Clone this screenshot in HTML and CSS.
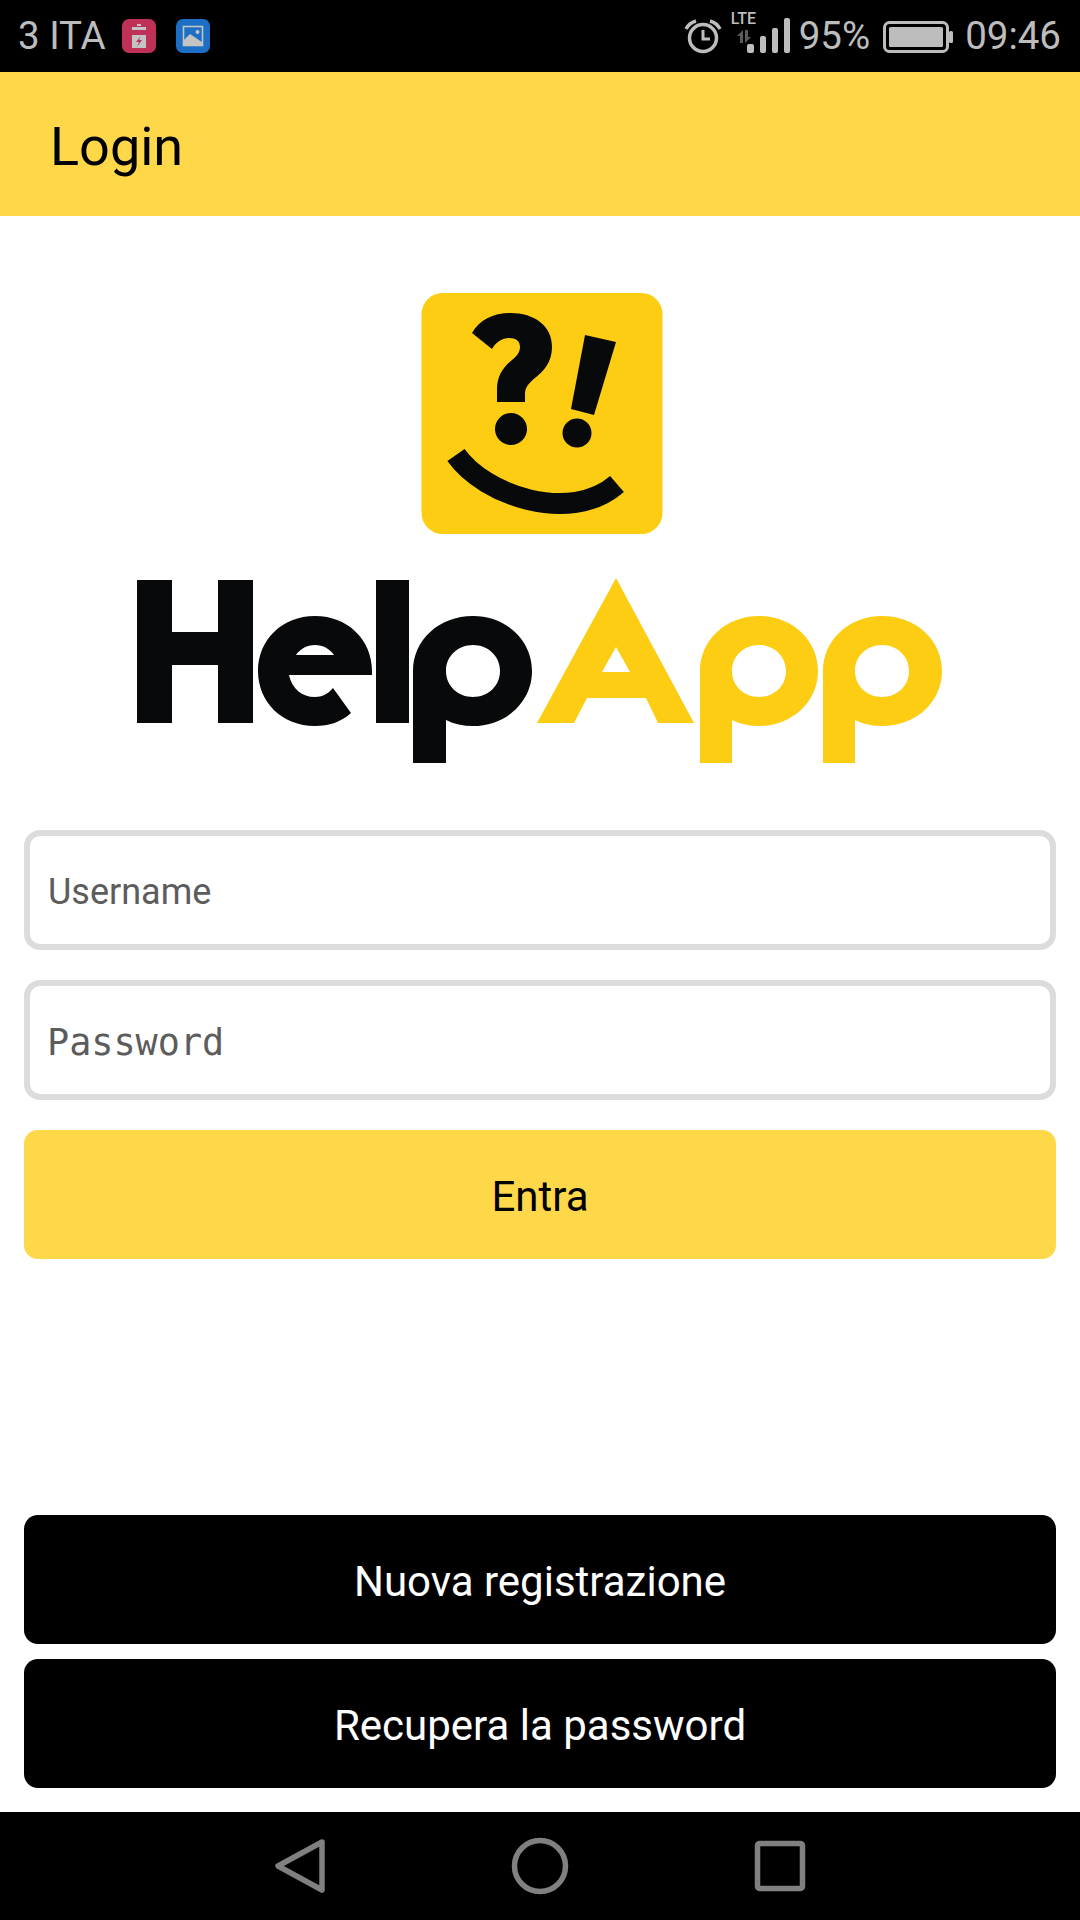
FILE: index.html
```html
<!DOCTYPE html>
<html lang="it">
<head>
<meta charset="utf-8">
<title>Login</title>
<link rel="stylesheet" href="styles.css">
</head>
<body>
<div class="screen">
  <header class="status-bar">
    <div class="status-left">
      <span class="status-text">3 ITA</span>
      <svg class="notif" viewBox="0 0 34 34"><rect width="34" height="34" rx="7" fill="#bf3157"/><path d="M15 5h4v2h-4zM10 8h14v21H10z" fill="#c4c4c4"/><rect x="10" y="11" width="14" height="5" fill="#bf3157"/><path d="M19 17l-5 6h3l-2 5 5-7h-3z" fill="#bf3157"/></svg>
      <svg class="notif" viewBox="0 0 34 34"><rect width="34" height="34" rx="7" fill="#1c6fc4"/><rect x="7.500" y="7.500" width="19" height="19" fill="none" stroke="#c4c4c4" stroke-width="1.600"/><circle cx="21.500" cy="13" r="2" fill="#c4c4c4"/><path d="M7 22l7-7 6 4 7 5v3H7z" fill="#c4c4c4"/></svg>
    </div>
    <div class="status-right">
      <svg class="alarm" viewBox="0 0 40 40">
        <circle cx="20" cy="22" r="13.500" fill="none" stroke="#bdbdbd" stroke-width="3.500"/>
        <path d="M20 14v9h7" fill="none" stroke="#bdbdbd" stroke-width="3"/>
        <path d="M3 13q3-6 10-8M37 13q-3-6-10-8" fill="none" stroke="#bdbdbd" stroke-width="3.500"/>
      </svg>
      <div class="network">
        <span class="lte">LTE</span>
        <svg class="signal" viewBox="0 0 62 40">
          <path d="M7 20l6-6v13h-3v-7zM15 14h3v7h3l-6 6z" fill="#5a5a5a"/>
          <rect x="17" y="28" width="7" height="9" rx="2" fill="#bdbdbd"/>
          <rect x="30" y="20" width="6" height="17" rx="2" fill="#bdbdbd"/>
          <rect x="42" y="12" width="6" height="25" rx="2" fill="#bdbdbd"/>
          <rect x="54" y="2" width="6" height="35" rx="2" fill="#bdbdbd"/>
        </svg>
      </div>
      <span class="status-text">95%</span>
      <svg class="battery" viewBox="0 0 72 34">
        <rect x="2.500" y="2.500" width="63" height="29" rx="5" fill="none" stroke="#bdbdbd" stroke-width="3"/>
        <rect x="7" y="7" width="54" height="20" rx="1.500" fill="#bdbdbd"/>
        <rect x="67" y="11" width="4" height="12" rx="1.500" fill="#bdbdbd"/>
      </svg>
      <span class="status-text">09:46</span>
    </div>
  </header>

  <div class="app-bar">Login</div>

  <main class="content">
    <svg class="logo" viewBox="130 293 820 470" role="img" aria-label="HelpApp">
      <rect x="421.500" y="293" width="241" height="241" rx="21" fill="#fdcd13"/>
      <g fill="#08090a">
        <path d="M472 333C479 320 493 313 510 313C535 313 552 326 552 347C552 362 544 371 535 378C529 383 525 387 525 394V402H497V389C497 376 503 367 512 360C517 356 520 352 520 347C520 341 516 338 509 338C502 338 496 342 492 349Z"/>
        <circle cx="511" cy="429" r="16"/>
        <path d="M585 335L616 342L594 415L571 409Z"/>
        <circle cx="577" cy="433" r="14.500"/>
        <path d="M456 455C484 495 570 525 617 484" fill="none" stroke="#08090a" stroke-width="21"/>
      </g>
      <g fill="#08090a">
        <path d="M137 580H172V632H218V580H253V723H218V665H172V723H137Z"/>
        <path fill-rule="evenodd" d="M372 675H289C292 689 302 697 315 697C322 697 328 694 333 688L351 713C341 722 329 726 315 726C282 726 258 702 258 671C258 640 282 616 315 616C348 616 372 640 372 671ZM296 655H334C330 649 323 645 315 645C307 645 300 649 296 655Z"/>
        <rect x="376" y="580" width="33" height="143"/>
        <path fill-rule="evenodd" d="M413 763V671C413 640 439 616 473 616C506 616 532 640 532 671C532 702 506 726 473 726C463 726 454 724 446 720V763ZM446 671C446 686 458 697 473 697C488 697 500 686 500 671C500 656 488 645 473 645C458 645 446 656 446 671Z"/>
      </g>
      <g fill="#fdcd13">
        <path fill-rule="evenodd" d="M616 578L694 723H658L646 698H587L574 723H537ZM616 647L602 672H630Z"/>
        <path fill-rule="evenodd" d="M700 763V671C700 640 726 616 759 616C792 616 818 640 818 671C818 702 792 726 759 726C749 726 740 724 732 720V763ZM732 671C732 686 744 697 759 697C774 697 786 686 786 671C786 656 774 645 759 645C744 645 732 656 732 671Z"/>
        <path fill-rule="evenodd" d="M823 763V671C823 640 849 616 882 616C916 616 942 640 942 671C942 702 916 726 882 726C872 726 863 724 855 720V763ZM855 671C855 686 867 697 882 697C897 697 909 686 909 671C909 656 897 645 882 645C867 645 855 656 855 671Z"/>
      </g>
    </svg>

    <form class="login-form">
      <div class="field">Username</div>
      <div class="field field-mono">Password</div>
      <div class="btn btn-primary">Entra</div>
    </form>

    <div class="secondary-actions">
      <div class="btn btn-dark">Nuova registrazione</div>
      <div class="btn btn-dark">Recupera la password</div>
    </div>
  </main>

  <nav class="nav-bar">
    <svg class="nav-icon" viewBox="0 0 60 60">
      <path d="M52 6L8 30L52 54Z" fill="none" stroke="#808080" stroke-width="5.500" stroke-linejoin="round"/>
    </svg>
    <svg class="nav-icon" viewBox="0 0 60 60">
      <circle cx="30" cy="30" r="25.500" fill="none" stroke="#808080" stroke-width="5.500"/>
    </svg>
    <svg class="nav-icon" viewBox="0 0 60 60">
      <rect x="7.500" y="7.500" width="45" height="45" rx="2" fill="none" stroke="#808080" stroke-width="5.500" stroke-linejoin="round"/>
    </svg>
  </nav>
</div>
</body>
</html>
```

FILE: styles.css
```css
* { box-sizing: border-box; }
html, body { margin: 0; padding: 0; }
body { font-family: Roboto, "Liberation Sans", sans-serif; background: #fff; color: #000; }

.screen { width: 1080px; height: 1920px; display: flex; flex-direction: column; overflow: hidden; }

.status-bar { height: 72px; flex: none; background: #000; display: flex; align-items: center; justify-content: space-between; padding: 0 19px 0 18px; }
.status-left, .status-right { display: flex; align-items: center; }
.status-left { gap: 16px; }
.status-right { gap: 7px; }
.status-text { font-size: 38.500px; line-height: 1; color: #bdbdbd; }
.notif { width: 34px; height: 34px; display: block; }
.notif + .notif { margin-left: 4px; }
.alarm { width: 40px; height: 40px; display: block; }
.network { position: relative; width: 62px; height: 40px; }
.lte { position: absolute; left: 1px; top: -5px; font-size: 16px; line-height: 1; color: #bdbdbd; font-weight: 500; }
.signal { width: 62px; height: 40px; display: block; }
.battery { width: 72px; height: 34px; display: block; margin: 2px 4px 0 5px; }

.app-bar { height: 144px; flex: none; background: #ffd84a; display: flex; align-items: center; padding: 4px 0 0 50px; font-size: 54px; }

.content { flex: 1; display: flex; flex-direction: column; padding: 77px 24px 24px; background: #fff; }
.logo { width: 820px; height: 470px; display: block; align-self: center; flex: none; }

.login-form { display: flex; flex-direction: column; gap: 30px; margin-top: 67px; }
.field { height: 120px; border: 6px solid #dcdcdc; border-radius: 16px; display: flex; align-items: center; padding: 4px 0 0 18px; font-size: 36px; color: #5c5c5c; background: #fff; }
.field-mono { font-family: "DejaVu Sans Mono", "Liberation Mono", monospace; font-size: 36.800px; padding-left: 17px; }

.btn { height: 129px; border-radius: 14px; display: flex; align-items: center; justify-content: center; padding-top: 3px; font-size: 42px; }
.btn-primary { background: #ffd84a; color: #000; }
.btn-dark { background: #000; color: #fff; }

.secondary-actions { margin-top: auto; display: flex; flex-direction: column; gap: 15px; }

.nav-bar { height: 108px; flex: none; background: #000; display: flex; align-items: center; justify-content: center; gap: 180px; }
.nav-icon { width: 60px; height: 60px; display: block; }
```
